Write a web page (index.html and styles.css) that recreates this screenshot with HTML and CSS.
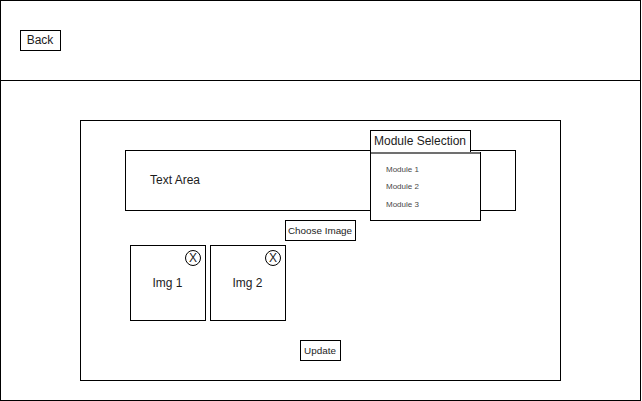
FILE: index.html
```html
<!DOCTYPE html>
<html lang="en">
<head>
<meta charset="utf-8">
<title>Update</title>
<link rel="stylesheet" href="styles.css">
</head>
<body>
<div class="page">
  <header class="header"><button class="box back">Back</button></header>
  <main class="main">
    <section class="panel">
      <div class="text-area">
        <span class="label">Text Area</span>
        <div class="dropdown">
          <button class="box toggle">Module Selection</button>
          <ul class="menu">
            <li>Module 1</li>
            <li>Module 2</li>
            <li>Module 3</li>
          </ul>
        </div>
      </div>
      <button class="box small choose">Choose Image</button>
      <div class="images">
        <div class="image"><span>Img 1</span><button class="remove"><svg width="18" height="18" viewBox="0 0 18 18"><circle cx="9" cy="9" r="7.5"/></svg><span>X</span></button></div>
        <div class="image"><span>Img 2</span><button class="remove"><svg width="18" height="18" viewBox="0 0 18 18"><circle cx="9" cy="9" r="7.5"/></svg><span>X</span></button></div>
      </div>
      <button class="box small update">Update</button>
    </section>
  </main>
</div>
</body>
</html>
```
FILE: styles.css
```css
* { box-sizing: border-box; margin: 0; padding: 0; }
body { background: #fff; color: #1c1c1c; font: 12px/14px "Liberation Sans", Arial, sans-serif; }
button { font: inherit; color: inherit; background: #fff; border: 0; }
.page { width: 641px; height: 401px; border: 1px solid #000; }
.header { height: 80px; padding: 29px 19px; border-bottom: 1px solid #000; }
.box { display: flex; align-items: center; justify-content: center; border: 1px solid #000; white-space: nowrap; padding-right: 1px; }
.back { width: 41px; height: 21px; padding-bottom: 1px; }
.main { padding: 39px 79px; }
.panel { width: 481px; height: 261px; border: 1px solid #000; padding: 29px 44px; }
.text-area { position: relative; display: flex; align-items: center; width: 391px; height: 61px; padding: 0 24px 1px; border: 1px solid #000; }
.dropdown { position: absolute; left: 244px; top: -21px; width: 111px; }
.toggle { width: 101px; height: 23px; border-bottom: 0; padding-bottom: 3px; }
.menu { height: 69px; margin-top: -1px; padding: 7px 15px; border: 1px solid #000; border-top: 0; background: #fff; box-shadow: inset 0 2px #707070; padding-top: 9px; list-style: none; font-size: 8px; line-height: 17.4px; color: #484848; }
.small { font-size: 9.9px; line-height: 12px; height: 21px; }
.choose { width: 71px; margin: 9px 0 0 160px; }
.images { display: flex; gap: 4px; margin: 4px 0 0 5px; }
.image { position: relative; display: flex; align-items: center; justify-content: center; width: 76px; height: 76px; padding: 0 1px 1px 0; border: 1px solid #000; }
.remove { position: absolute; top: 3px; right: 3px; display: grid; place-items: center; width: 18px; height: 18px; background: none; }
.remove > * { grid-area: 1 / 1; }
.remove svg { fill: #fff; stroke: #000; }
.update { width: 41px; margin: 19px 0 0 175px; }
```
